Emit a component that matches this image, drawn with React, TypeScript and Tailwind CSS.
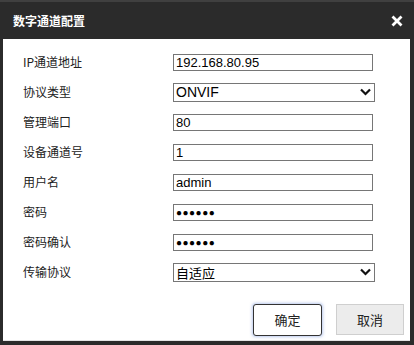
import React from 'react';

const cjk = "font-['Microsoft_YaHei','Noto_Sans_CJK_SC',sans-serif]";
const latin = "font-['Liberation_Sans','Noto_Sans_CJK_SC',sans-serif]";

const Chevron: React.FC = () => (
  <svg width="11" height="8" viewBox="0 0 11 8" className="mr-[3px]">
    <polyline points="1,1.5 5.5,6 10,1.5" fill="none" stroke="#111" strokeWidth="2.2" />
  </svg>
);

const TextBox: React.FC<{ value: string; password?: boolean }> = ({ value, password }) => (
  <div className="w-[200px] h-[17px] border border-[#767676] pl-[2px] flex items-center overflow-hidden">
    {password ? (
      <span className={`text-[10px] tracking-[0.5px] text-black ${latin}`}>{'●'.repeat(value.length)}</span>
    ) : (
      <span className={`text-[13px] leading-[15px] text-black ${latin}`}>{value}</span>
    )}
  </div>
);

const SelectBox: React.FC<{ value: string; cn?: boolean }> = ({ value, cn }) => (
  <div className="w-[202px] h-[19px] border border-[#767676] flex items-center justify-between pl-[2px]">
    <span className={`${cn ? 'text-[13px]' : 'text-[14px]'} leading-[17px] text-black ${cn ? cjk : latin}`}>{value}</span>
    <Chevron />
  </div>
);

const Row: React.FC<{ label: string; children: React.ReactNode }> = ({ label, children }) => (
  <div className="h-[30px] flex items-center">
    <span className={`w-[170px] shrink-0 pl-[20px] text-[12px] text-[#222] ${cjk}`}>{label}</span>
    {children}
  </div>
);

const App: React.FC = () => {
  return (
    <div className="w-[414px] h-[345px] bg-[#2b2b2b] flex flex-col">
      <div className="h-[39px] flex items-center justify-between pl-[13px] pr-[11px] border-t-2 border-[#404040]">
        <span className={`text-white text-[12px] font-bold ${cjk}`}>数字通道配置</span>
        <svg width="12" height="12" viewBox="0 0 12 12">
          <path d="M1.5 1.5 L10.5 10.5 M10.5 1.5 L1.5 10.5" stroke="#fff" strokeWidth="2.8" />
        </svg>
      </div>
      <div className="flex-1 bg-white ml-[3px] mr-[4px] mb-[4px] pt-[8px] flex flex-col border-b border-[#e4e4e4]">
        <Row label="IP通道地址"><TextBox value="192.168.80.95" /></Row>
        <Row label="协议类型"><SelectBox value="ONVIF" /></Row>
        <Row label="管理端口"><TextBox value="80" /></Row>
        <Row label="设备通道号"><TextBox value="1" /></Row>
        <Row label="用户名"><TextBox value="admin" /></Row>
        <Row label="密码"><TextBox value="123456" password /></Row>
        <Row label="密码确认"><TextBox value="123456" password /></Row>
        <Row label="传输协议"><SelectBox value="自适应" cn /></Row>
        <div className="mt-[17px] flex justify-end gap-[14px] pr-[6px]">
          <button
            className={`w-[69px] h-[32px] rounded-[3px] border border-[#333] bg-white text-[13px] text-[#222] shadow-[0_0_3px_1px_rgba(120,150,220,0.5)] ${cjk}`}
          >
            确定
          </button>
          <button
            className={`w-[68px] h-[31px] border border-[#cfcfcf] bg-[#ececec] text-[13px] text-[#222] ${cjk}`}
          >
            取消
          </button>
        </div>
      </div>
    </div>
  );
};

export default App;
